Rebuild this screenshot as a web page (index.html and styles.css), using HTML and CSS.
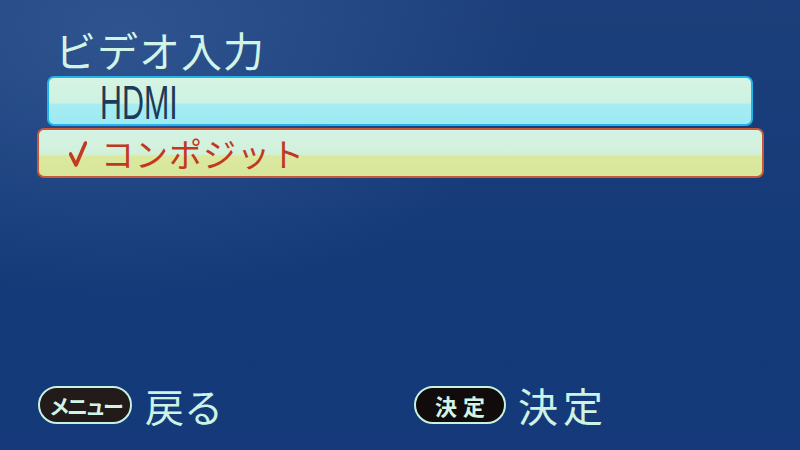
FILE: index.html
```html
<!DOCTYPE html>
<html lang="ja">
<head>
<meta charset="utf-8">
<link rel="stylesheet" href="styles.css">
</head>
<body>
<div class="screen">
  <h1 class="title">ビデオ入力</h1>
  <div class="list">
    <div class="item item-normal"><span class="label-en">HDMI</span></div>
    <div class="item item-selected">
      <svg class="check" width="18" height="26" viewBox="0 0 18 26"><path d="M1.5 13 L7 24 L16.5 2" fill="none" stroke="#c33a22" stroke-width="3.6" stroke-linecap="round" stroke-linejoin="round"/></svg>
      <span class="label-jp">コンポジット</span>
    </div>
  </div>
  <div class="footer">
    <div class="hint hint-back">
      <span class="pill pill-menu">メニュー</span>
      <span class="hint-text">戻る</span>
    </div>
    <div class="hint hint-ok">
      <span class="pill pill-ok">決定</span>
      <span class="hint-text hint-text-ok">決定</span>
    </div>
  </div>
</div>
</body>
</html>
```

FILE: styles.css
```css
html, body {
  margin: 0;
  padding: 0;
}
body {
  width: 800px;
  height: 450px;
  overflow: hidden;
  font-family: "Noto Sans CJK JP", "Noto Sans", sans-serif;
}
.screen {
  width: 800px;
  height: 450px;
  box-sizing: border-box;
  display: flex;
  flex-direction: column;
  background:
    radial-gradient(ellipse 420px 260px at 120px 40px, rgba(70,110,170,0.45), rgba(70,110,170,0) 100%),
    linear-gradient(180deg, #1c3f7a 0%, #143a78 60%, #15397a 100%);
}
.title {
  margin: 22px 0 0 55px;
  font-size: 41px;
  font-weight: 400;
  line-height: 54px;
  color: #d2f4e6;
  letter-spacing: 1px;
}
.list {
  display: flex;
  flex-direction: column;
  gap: 2px;
}
.item {
  box-sizing: border-box;
  display: flex;
  align-items: center;
  border-radius: 7px;
}
.item-normal {
  margin: 0 47px 0 47px;
  height: 50px;
  border: 2px solid #22b4ea;
  background: linear-gradient(180deg, #d6f4e2 0%, #cdf2e2 54%, #a4ecf2 58%, #9eeaf2 100%);
  padding-left: 51px;
}
.item-selected {
  margin: 0 36px 0 37px;
  height: 50px;
  border: 2px solid #c8583a;
  background: linear-gradient(180deg, #d4f2e2 0%, #d2f1dc 52%, #dbe9a0 57%, #d6e69a 100%);
  padding-left: 30px;
}
.label-en {
  display: inline-block;
  font-family: "Liberation Sans", "DejaVu Sans", sans-serif;
  font-size: 49px;
  line-height: 46px;
  color: #1d3a58;
  transform: scaleX(0.62);
  transform-origin: left center;
  margin-top: 2px;
}
.check {
  display: block;
  margin-top: 1px;
  margin-right: 14px;
}
.label-jp {
  font-size: 33px;
  line-height: 40px;
  color: #c2381f;
  letter-spacing: 1px;
}
.footer {
  margin-top: auto;
  margin-bottom: 24px;
  display: flex;
  align-items: center;
  padding-left: 38px;
}
.hint {
  display: flex;
  align-items: center;
}
.hint-back {
  width: 376px;
}
.pill {
  box-sizing: border-box;
  height: 38px;
  border: 2px solid #c6f2e0;
  border-radius: 19px;
  background: #231a1a;
  color: #d2f4e6;
  display: flex;
  align-items: center;
  justify-content: center;
  font-weight: 700;
}
.pill-menu {
  width: 94px;
  font-size: 21px;
  letter-spacing: -3px;
}
.pill-ok {
  width: 92px;
  font-size: 22px;
  letter-spacing: 6px;
  padding-left: 6px;
  background: #120b0b;
}
.hint-text {
  font-size: 39px;
  line-height: 42px;
  color: #cdf3e6;
  margin-left: 13px;
}
.hint-text-ok {
  font-size: 40px;
  letter-spacing: 5px;
  margin-left: 12px;
}
```
